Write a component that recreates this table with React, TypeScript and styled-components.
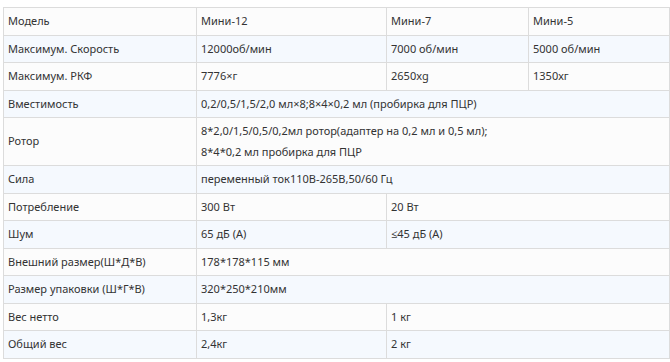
import React from "react";
import styled, { createGlobalStyle } from "styled-components";

const GlobalStyle = createGlobalStyle`
  body {
    margin: 0;
    background: #fff;
  }
`;

const Wrap = styled.div`
  padding: 7px 2px 0 3px;
`;

const Table = styled.table`
  width: 666px;
  border-collapse: collapse;
  table-layout: fixed;
  font-family: "Noto Sans", "Open Sans", sans-serif;
  font-size: 11px;
  color: #333;
`;

const Col = styled.col<{ $w: number }>`
  width: ${(p) => p.$w}px;
`;

const Row = styled.tr<{ $alt?: boolean }>`
  background: ${(p) => (p.$alt ? "#f5f9fe" : "#fcfcfc")};
`;

const Cell = styled.td`
  border: 1px solid #dcdcdc;
  padding: 3px 4px;
  line-height: 20.5px;
  vertical-align: middle;
  white-space: nowrap;
`;

type Spec = { label: string; cells: [string, number][] };

const widths = [193, 190, 142, 141];

const specs: Spec[] = [
  { label: "Модель", cells: [["Мини-12", 1], ["Мини-7", 1], ["Мини-5", 1]] },
  { label: "Максимум. Скорость", cells: [["12000об/мин", 1], ["7000 об/мин", 1], ["5000 об/мин", 1]] },
  { label: "Максимум. РКФ", cells: [["7776×г", 1], ["2650xg", 1], ["1350хг", 1]] },
  { label: "Вместимость", cells: [["0,2/0,5/1,5/2,0 мл×8;8×4×0,2 мл (пробирка для ПЦР)", 3]] },
  {
    label: "Ротор",
    cells: [["8*2,0/1,5/0,5/0,2мл ротор(адаптер на 0,2 мл и 0,5 мл);\n8*4*0,2 мл пробирка для ПЦР", 3]],
  },
  { label: "Сила", cells: [["переменный ток110В-265В,50/60 Гц", 3]] },
  { label: "Потребление", cells: [["300 Вт", 1], ["20 Вт", 2]] },
  { label: "Шум", cells: [["65 дБ (A)", 1], ["≤45 дБ (A)", 2]] },
  { label: "Внешний размер(Ш*Д*В)", cells: [["178*178*115 мм", 3]] },
  { label: "Размер упаковки (Ш*Г*В)", cells: [["320*250*210мм", 3]] },
  { label: "Вес нетто", cells: [["1,3кг", 1], ["1 кг", 2]] },
  { label: "Общий вес", cells: [["2,4кг", 1], ["2 кг", 2]] },
];

const App: React.FC = () => {
  return (
    <Wrap>
      <GlobalStyle />
      <Table>
        <colgroup>
          {widths.map((w, i) => (
            <Col key={i} $w={w} />
          ))}
        </colgroup>
        <tbody>
          {specs.map((s, i) => (
            <Row key={s.label} $alt={i % 2 === 1}>
              <Cell>{s.label}</Cell>
              {s.cells.map(([text, span], j) => (
                <Cell key={j} colSpan={span}>
                  {text.split("\n").map((line, k) => (
                    <React.Fragment key={k}>
                      {k > 0 && <br />}
                      {line}
                    </React.Fragment>
                  ))}
                </Cell>
              ))}
            </Row>
          ))}
        </tbody>
      </Table>
    </Wrap>
  );
};

export default App;
